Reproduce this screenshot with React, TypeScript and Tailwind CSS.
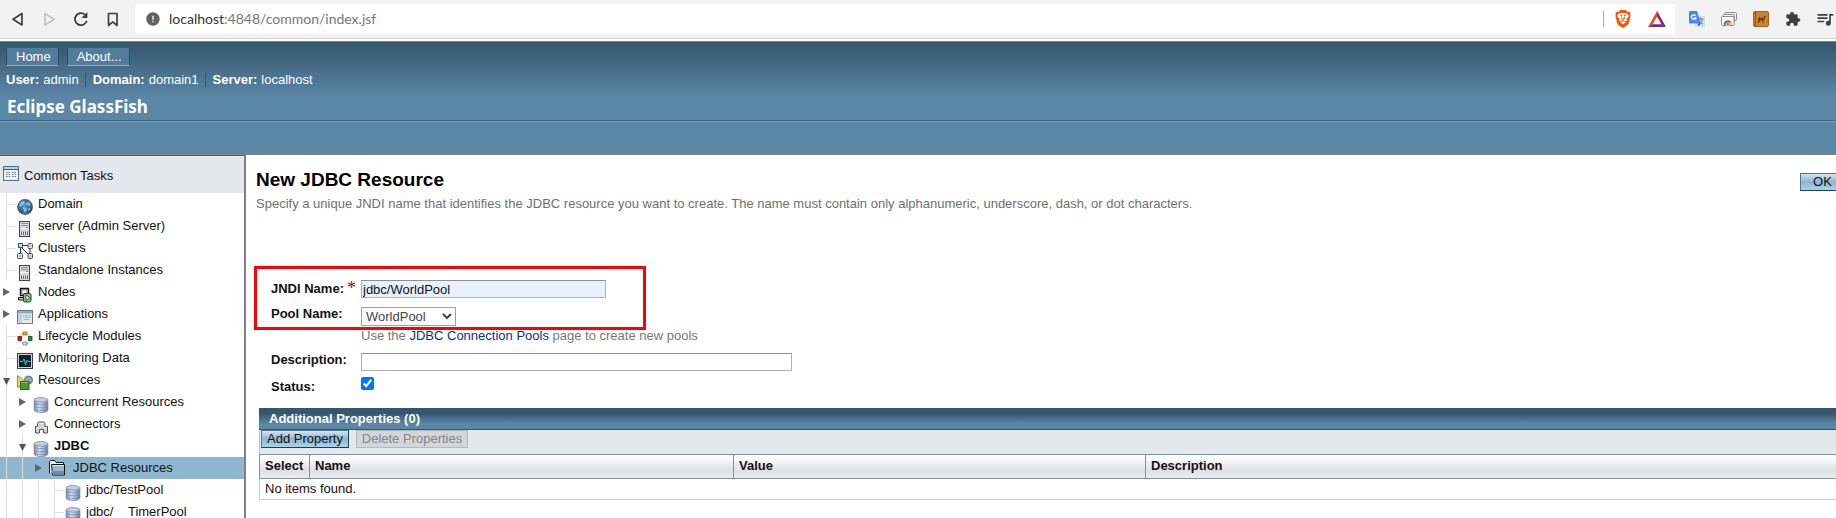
import type { ReactNode } from "react";
import { MdError, MdExtension, MdQueueMusic } from "react-icons/md";
import { SiBrave } from "react-icons/si";

/* ---------- Tree icons ---------- */

const Icon = ({ children }: { children: ReactNode }) => (
  <svg viewBox="0 0 16 16" className="size-4 shrink-0" aria-hidden="true">
    {children}
  </svg>
);

const TasksIcon = () => (
  <Icon>
    <rect x=".5" y=".5" width="15" height="14" fill="#eef1f4" stroke="#4b6f8c" />
    <rect x="1" y="1" width="14" height="2" fill="#b5d3e6" />
    <path d="M0 3.500h16" stroke="#3c5f7c" />
    <path d="M3 6.500h4M9 6.500h4M3 8.500h4M9 8.500h4M3 10.500h4M9 10.500h4" stroke="#6f7780" strokeDasharray="1 .5" />
  </Icon>
);

const GlobeIcon = () => (
  <Icon>
    <defs>
      <radialGradient id="globe" cx=".45" cy=".4" r=".65">
        <stop offset="0" stopColor="#5f9cc8" />
        <stop offset=".6" stopColor="#2f6797" />
        <stop offset="1" stopColor="#1d4468" />
      </radialGradient>
    </defs>
    <circle cx="8" cy="8" r="7.900" fill="url(#globe)" />
    <path d="M3 3.500 6 2l2 1-1 2-2 1-1 1.500L2 7zM9 4l3-1 2 3-1.500 1L11 5.500 9.500 6zM6 8l3 1 1 2-2 3-1.500-3zM11.500 9l2-.5-1 3-1.500.5z" fill="#a9d2e8" opacity=".75" />
    <path d="M2.500 12.200c3.500 3.500 7.500 3.500 11 0-2 3-9 3-11 0z" fill="#b4d8ea" opacity=".8" />
  </Icon>
);

const ServerIcon = () => (
  <Icon>
    <rect x="2.500" y=".5" width="10" height="15" fill="#d8dadd" stroke="#3f4347" />
    <path d="M4 2.500h7M4 4.500h7" stroke="#8b9095" />
    <path d="M3 7.500h9" stroke="#f6f7f8" />
    <rect x="9" y="6" width="2" height="1" fill="#4f8fb0" />
    <path d="M4.500 10.500v3.500M6.500 10.500v3.500M8.500 10.500v3.500M10.500 10.500v3.500" stroke="#6a6e73" />
  </Icon>
);

const ClusterIcon = () => (
  <Icon>
    <path d="M5 2.500h6M3.500 5v6M5 5l6.500 6.500M13 5v6" stroke="#333" fill="none" />
    <rect x="1.500" y=".5" width="4" height="4" fill="#bfe0f2" stroke="#2f5878" />
    <rect x="11" y=".5" width="4.500" height="5" rx="1" fill="#dfe8ee" stroke="#555" />
    <rect x=".5" y="10.500" width="5" height="5" rx="1" fill="#dfe8ee" stroke="#444" />
    <rect x="11" y="10.500" width="4.500" height="5" rx="1" fill="#dfe8ee" stroke="#444" />
    <path d="M2 13h2M12.500 13h2M12.500 3h2" stroke="#7b8b96" />
  </Icon>
);

const NodeIcon = () => (
  <Icon>
    <path d="M3.500 1.500h8v7h-8z" fill="#d5dce2" stroke="#111" strokeWidth="1.400" />
    <path d="M5 3h5v4H5z" fill="#f6f8fa" stroke="#555" strokeWidth=".6" />
    <path d="M1.500 10.500h9v2.500h-9z" fill="#c5ccd2" stroke="#111" />
    <rect x="6.500" y="6.500" width="7.500" height="8.500" rx="1.500" fill="#8cc07c" stroke="#14481a" />
    <path d="M9 8v5.500l4-2.750z" fill="#fff" stroke="#14481a" strokeWidth=".8" />
  </Icon>
);

const AppIcon = () => (
  <Icon>
    <rect x=".5" y="1.500" width="15" height="13" fill="#e4ebf2" stroke="#6e7a86" />
    <rect x="1" y="2" width="14" height="2.500" fill="#8fadca" />
    <rect x="1" y="5" width="4" height="9" fill="#c3cfdc" />
    <path d="M6.500 6.500h3v2h-3zM10.500 6.500h3v2h-3zM6.500 10.500h6" stroke="#a8b6c4" fill="#f4f7fa" />
  </Icon>
);

const LifecycleIcon = () => (
  <Icon>
    <circle cx="8" cy="7.500" r="5.500" fill="none" stroke="#8f969d" strokeDasharray="1.500 1" />
    <rect x="6" y="1" width="4" height="3" fill="#f0b323" stroke="#9a6a00" strokeWidth=".8" />
    <rect x="1" y="5.500" width="3.500" height="4" fill="#c4161c" stroke="#7b0c10" strokeWidth=".8" />
    <rect x="11.500" y="5.500" width="3.500" height="4" fill="#2f8a2c" stroke="#175216" strokeWidth=".8" />
    <rect x="6" y="11" width="4" height="3" fill="#c7dfec" stroke="#6b8fa5" strokeWidth=".8" />
  </Icon>
);

const MonitorIcon = () => (
  <Icon>
    <rect x=".5" y=".5" width="15" height="15" fill="#cfd3d6" stroke="#3d4145" />
    <rect x="2" y="2" width="12" height="12" fill="#0b2430" />
    <path d="M3 8.500h2.500L7 6l1.500 6L10 7l1 1.500h2.500" stroke="#2fd2dc" fill="none" />
  </Icon>
);

const ResourcesIcon = () => (
  <Icon>
    <circle cx="11.500" cy="5" r="4" fill="#93a7b9" stroke="#5d7284" />
    <path d="M.5.5v12l3-1.500V8l5.500-.500z" fill="#f5cf73" stroke="#b98a24" />
    <rect x="3.500" y="6.500" width="8.500" height="8" fill="#4c9a2e" stroke="#2b6414" />
    <path d="M4.500 7.500h6.500" stroke="#8ccb6c" />
  </Icon>
);

const DatabaseIcon = () => (
  <Icon>
    <defs>
      <linearGradient id="db">
        <stop offset="0" stopColor="#7d98c0" />
        <stop offset=".4" stopColor="#d5e1f2" />
        <stop offset="1" stopColor="#6d82a6" />
      </linearGradient>
    </defs>
    <path d="M1.200 3v10c0 1.500 3 2.600 6.800 2.600s6.800-1.100 6.800-2.600V3z" fill="url(#db)" stroke="#7584a0" strokeWidth=".8" />
    <path d="M1.200 5.500c0 1.300 3 2.300 6.800 2.300s6.800-1 6.800-2.300M1.200 8.500c0 1.300 3 2.300 6.800 2.300s6.800-1 6.800-2.300M1.200 11.300c0 1.300 3 2.300 6.800 2.300s6.800-1 6.800-2.300" stroke="#65779a" fill="none" strokeWidth=".7" />
    <ellipse cx="8" cy="2.800" rx="6.800" ry="2.300" fill="#c3cedd" stroke="#74839a" strokeWidth=".7" />
  </Icon>
);

const ConnectorIcon = () => (
  <Icon>
    <path d="M4.500 4.500c0-1 .8-1.500 2-1.500h3.500c1.200 0 2 .5 2 1.500v3h2.500v6.500h-4V10.500h-4v3.500h-4V7.500h2z" fill="#d0d3d6" stroke="#4e5256" />
    <path d="M6.500 4.500h4M3.500 9h2M11.500 9h2" stroke="#f8f8f8" />
  </Icon>
);

const FolderIcon = () => (
  <Icon>
    <path d="M.5 13.500V1.500L1.500.5h4L7 2.500h7.500V5" fill="#f5f8fb" stroke="#111" />
    <path d="M2.500 4.500h13v10.500h-12z" fill="#9db6cf" stroke="#111" />
    <path d="M3 5.500h12" stroke="#dfe9f2" />
    <path d="M3 11h12v3.500H3.500z" fill="#6f8eae" />
  </Icon>
);

/* ---------- Tree ---------- */

type Guide = "line" | "branch" | "closed" | "open";

const GUIDE_PATHS: Record<Guide, ReactNode> = {
  line: <rect x="5" width="1" height="22" fill="#ddd" />,
  branch: <path d="M5 0h1v11h8v1H6v10H5z" fill="#ddd" />,
  closed: <path d="M2 7v8l7-4z" fill="#666" />,
  open: (
    <>
      <path d="M5 0h1v22H5z" fill="#ddd" />
      <path d="M2 9h7l-3.500 7z" fill="#555" />
    </>
  ),
};

const GuideCell = ({ kind }: { kind: Guide }) => (
  <svg viewBox="0 0 16 22" className="h-[22px] w-4 shrink-0" aria-hidden="true">
    {GUIDE_PATHS[kind]}
  </svg>
);

interface TreeItem {
  label: string;
  guides: Guide[];
  icon: ReactNode;
  bold?: boolean;
  selected?: boolean;
}

const TREE: TreeItem[] = [
  { label: "Domain", guides: ["branch"], icon: <GlobeIcon /> },
  { label: "server (Admin Server)", guides: ["branch"], icon: <ServerIcon /> },
  { label: "Clusters", guides: ["branch"], icon: <ClusterIcon /> },
  { label: "Standalone Instances", guides: ["branch"], icon: <ServerIcon /> },
  { label: "Nodes", guides: ["closed"], icon: <NodeIcon /> },
  { label: "Applications", guides: ["closed"], icon: <AppIcon /> },
  { label: "Lifecycle Modules", guides: ["branch"], icon: <LifecycleIcon /> },
  { label: "Monitoring Data", guides: ["branch"], icon: <MonitorIcon /> },
  { label: "Resources", guides: ["open"], icon: <ResourcesIcon /> },
  { label: "Concurrent Resources", guides: ["line", "closed"], icon: <DatabaseIcon /> },
  { label: "Connectors", guides: ["line", "closed"], icon: <ConnectorIcon /> },
  { label: "JDBC", guides: ["line", "open"], icon: <DatabaseIcon />, bold: true },
  { label: "JDBC Resources", guides: ["line", "line", "closed"], icon: <FolderIcon />, selected: true },
  { label: "jdbc/TestPool", guides: ["line", "line", "line", "branch"], icon: <DatabaseIcon /> },
  { label: "jdbc/__TimerPool", guides: ["line", "line", "line", "branch"], icon: <DatabaseIcon /> },
];

const TreeRow = ({ item }: { item: TreeItem }) => (
  <li className={item.selected ? "flex h-[22px] bg-[#8fb7d0] pl-px" : "flex h-[22px] pl-px"}>
    {item.guides.map((kind, i) => (
      <GuideCell key={i} kind={kind} />
    ))}
    <span className={item.selected ? "mr-2 pt-[3px]" : "mr-[5px] pt-1.5"}>{item.icon}</span>
    <a href="#" className={item.bold ? "font-bold leading-[22px]" : "leading-[22px]"}>
      {item.label}
    </a>
  </li>
);

const Sidebar = () => (
  <aside className="w-[246px] shrink-0 overflow-hidden border-r-2 border-[#808080]">
    <div className="flex h-[38px] items-center gap-[5px] border-t border-[#3f6480] bg-[#e4e8ec] pl-[3px]">
      <TasksIcon />
      <a href="#" className="pt-1">
        Common Tasks
      </a>
    </div>
    <ul>
      {TREE.map((item) => (
        <TreeRow key={item.label} item={item} />
      ))}
    </ul>
  </aside>
);

/* ---------- Browser bar ---------- */

const TranslateIcon = () => (
  <Icon>
    <rect x="6" y="5" width="10" height="11" rx="1" fill="#dadce0" />
    <path d="M8.500 8h6M11.500 6.500V8M13.500 8c-.5 2.500-2 4-3.500 5M10 9.500c1 2 2.500 3 4 3.500" stroke="#5f7f9a" fill="none" />
    <path d="M1 0h7l4 12.500H1a1 1 0 0 1-1-1V1a1 1 0 0 1 1-1z" fill="#4a86e8" />
    <path d="M8.500 12.500h3.500L9.500 15.500z" fill="#2f5fc0" />
    <path d="M6.800 5A2.300 2.300 0 1 0 7 6.800H4.800" fill="none" stroke="#fff" strokeWidth="1.200" />
  </Icon>
);

const ScreensIcon = () => (
  <Icon>
    <rect x="4" y="1.500" width="11.500" height="8" rx="1" fill="#f1f1f1" stroke="#8b8b8b" />
    <rect x="2" y="3.500" width="11.500" height="8" rx="1" fill="#f1f1f1" stroke="#8b8b8b" />
    <rect x=".5" y="5.500" width="12.500" height="9" rx="1" fill="#fff" stroke="#8b8b8b" />
    <path d="M2.500 14a4.300 4.300 0 0 1 2.200-4l2 3.500z" fill="#2fa04c" />
    <path d="M3.500 11a4.300 4.300 0 0 1 7 0l-3.500 1.500z" fill="#e23b2e" />
    <path d="M10.500 11c.6.800.8 2 .6 3H7z" fill="#f7c52b" />
    <circle cx="6.900" cy="13" r="1.600" fill="#3d7bea" stroke="#fff" strokeWidth=".6" />
  </Icon>
);

const CamelIcon = () => (
  <Icon>
    <rect x=".5" y=".5" width="15" height="15" rx="1.500" fill="#cd7f32" stroke="#a8611f" />
    <path d="M2.500 1v14" stroke="#8c4f17" />
    <path d="M5 12V8l1.500-2L8 7.500 9.500 6l1 1.500.8-2.500H13v1h-1l-.5 2.500-1 1V12h-1V9.500H7L6 12z" fill="#6b3c12" />
  </Icon>
);

const BrowserBar = () => (
  <div className="flex h-[39px] items-center border-b border-[#cfd8d9] bg-[#f2f2f2] text-[#3c4043]">
    <div className="flex w-[135px] shrink-0 items-center gap-[14px] pl-2">
      <button type="button" aria-label="Back">
        <svg viewBox="0 0 18 18" className="size-[18px]" fill="none" stroke="currentColor" strokeWidth="1.700" strokeLinejoin="round">
          <path d="M14 3.500v11.500L5 9.200z" />
        </svg>
      </button>
      <button type="button" aria-label="Forward" className="text-[#c2c2c2]">
        <svg viewBox="0 0 18 18" className="size-[18px]" fill="none" stroke="currentColor" strokeWidth="1.700" strokeLinejoin="round">
          <path d="M5 3.500v11.500L14 9.200z" />
        </svg>
      </button>
      <button type="button" aria-label="Reload">
        <svg viewBox="0 0 18 18" className="size-[18px]" fill="none" stroke="currentColor" strokeWidth="1.800" strokeLinecap="round">
          <path d="M14.500 11.500A6 6 0 1 1 13 4.700" />
          <path d="M14.800 3.500v3.800H11z" fill="currentColor" stroke="currentColor" strokeWidth="1.200" />
        </svg>
      </button>
      <button type="button" aria-label="Bookmark">
        <svg viewBox="0 0 18 18" className="size-[18px]" fill="none" stroke="currentColor" strokeWidth="1.700" strokeLinejoin="round">
          <path d="M4.500 3.500H13v12l-4.250-3.700L4.500 15.500z" />
        </svg>
      </button>
    </div>
    <div className="flex h-[30px] grow items-center rounded-[3px] bg-white pl-2.5 pr-[9px]">
      <MdError className="size-4 shrink-0 text-[#5f6368]" />
      <button type="button" className="grow pl-2 text-left font-['Lato',sans-serif] text-[14px] leading-5 text-[#777]">
        <span className="text-[#333]">localhost</span>:4848/common/index.jsf
      </button>
      <span className="h-4 w-px bg-[#a9a9a9]" />
      <SiBrave className="ml-2.5 h-[18px] w-[18px] text-[#ff5000]" />
      <svg viewBox="0 0 18 16" className="ml-4 h-4 w-[18px]" aria-hidden="true">
        <path d="M9 0 0 16l4.500-2.500L9 5.500z" fill="#ff4724" />
        <path d="M9 0l9 16-4.500-2.500L9 5.500z" fill="#9e1f63" />
        <path d="M0 16h18l-4.500-2.700h-9z" fill="#662d91" />
      </svg>
    </div>
    <div className="flex shrink-0 items-center gap-4 pl-3.5 pr-[1px]">
      <TranslateIcon />
      <ScreensIcon />
      <CamelIcon />
      <MdExtension className="size-4" />
      <MdQueueMusic className="-ml-0.5 size-5" />
    </div>
  </div>
);

/* ---------- Masthead ---------- */

const MastButton = ({ children }: { children: ReactNode }) => (
  <button
    type="button"
    className="h-[18px] border-x border-b border-x-[#2f4a66] border-b-[#8fb4cd] bg-[#527c9b] pl-[9px] pr-[7px] leading-[17px]"
  >
    {children}
  </button>
);

const Masthead = () => (
  <header className="mt-0.5 h-[114px] shrink-0 border-b-2 border-t border-[#808080] bg-linear-to-b from-[#35566d] to-[#5b87a6] to-50% text-white">
    <nav className="flex gap-2 pl-1.5 pt-1.5">
      <MastButton>Home</MastButton>
      <MastButton>About...</MastButton>
    </nav>
    <dl className="mt-[7px] flex h-[14px] gap-1.5 pl-1.5 leading-[14px]">
      {[
        ["User:", "admin"],
        ["Domain:", "domain1"],
        ["Server:", "localhost"],
      ].map(([term, value], i) => (
        <div key={term} className={i ? "flex gap-1 border-l border-[#35566d] pl-[7px]" : "flex gap-1"}>
          <dt className="font-bold">{term}</dt>
          <dd>{value}</dd>
        </div>
      ))}
    </dl>
    <div className="mt-2 h-[26px] border-b border-[#3f6480] pl-[7px] font-['Noto_Sans',sans-serif] text-[17px] font-bold leading-6">
      Eclipse GlassFish
    </div>
    <div className="h-px bg-[#7ba3bf]" />
  </header>
);

/* ---------- Content ---------- */

const PRIMARY =
  "h-[18px] border border-b-[#1d3c5a] border-l-[#55758f] border-r-[#1d3c5a] border-t-[#55758f] bg-linear-to-b from-[#d3e4ee] via-[#8db6cf] to-[#a9d3ec] leading-4";

const FIELD = "h-[18px] border border-[#b0b0b0] border-t-[#8f8f8f] px-px pt-px leading-4";

const HEAD = "border border-[#7b929f] px-[5px] text-left font-bold last:border-r-0";

const ResourceForm = () => (
  <form className="relative mt-[67px] flex flex-col pl-[15px] leading-[18px]">
    <div className="flex">
      <label htmlFor="jndi" className="flex w-[90px] gap-[3px] font-bold">
        JNDI Name:
        <span className="font-['Liberation_Serif',serif] text-[18px] font-normal leading-4 text-[#b00000]">*</span>
      </label>
      <input id="jndi" defaultValue="jdbc/WorldPool" className={`${FIELD} w-[245px] bg-[#e8f0fe]`} />
    </div>
    <div className="mt-[7px] flex">
      <label htmlFor="pool" className="w-[90px] font-bold">
        Pool Name:
      </label>
      <div className="pt-0.5">
        <select id="pool" className="block h-[19px] w-[95px] border border-[#a0a0a0] bg-white text-[#444]">
          <option>WorldPool</option>
        </select>
        <p className="mt-px text-[#777]">
          Use the{" "}
          <a href="#" className="text-[#0a2f8f]">
            JDBC Connection Pools
          </a>{" "}
          page to create new pools
        </p>
      </div>
    </div>
    <div className="mt-1.5 flex">
      <label htmlFor="description" className="w-[90px] font-bold">
        Description:
      </label>
      <input id="description" className={`${FIELD} mt-0.5 w-[431px] bg-white`} />
    </div>
    <div className="mt-1.5 flex pb-px">
      <label htmlFor="status" className="w-[90px] pt-px font-bold">
        Status:
      </label>
      <input id="status" type="checkbox" defaultChecked className="size-[13px]" />
    </div>
    <div className="pointer-events-none absolute -left-0.5 -top-3.5 h-16 w-[392px] border-[3px] border-[#ff0000]" />
  </form>
);

const PropertiesTable = () => (
  <section className="ml-[3px] mt-[11px]">
    <h2 className="h-[22px] border-b border-[#35566d] bg-linear-to-b from-[#35566d] from-25% to-[#5b87a6] to-75% pl-2.5 font-bold leading-[22px] text-white">
      Additional Properties (0)
    </h2>
    <div className="flex h-6 gap-[7px] border-l border-[#b9c3c9] bg-[#e4e8ec] pl-px">
      <button type="button" className={`${PRIMARY} w-[88px]`}>
        Add Property
      </button>
      <button type="button" disabled className="h-[18px] w-[112px] border border-[#b5b8bc] bg-[#d2d5d9] leading-4 text-[#848689]">
        Delete Properties
      </button>
    </div>
    <table className="w-full table-fixed border-collapse border-b border-l border-[#c9cdcf]">
      <thead>
        <tr className="h-6 bg-linear-to-b from-[#fafafb] from-20% via-[#dfe0e4] via-70% to-[#eeeef0]">
          <th className={`${HEAD} w-[50px]`}>Select</th>
          <th className={`${HEAD} w-[424px]`}>Name</th>
          <th className={`${HEAD} w-[412px]`}>Value</th>
          <th className={HEAD}>Description</th>
        </tr>
      </thead>
      <tbody>
        <tr>
          <td colSpan={4} className="px-[5px] leading-5">
            No items found.
          </td>
        </tr>
      </tbody>
    </table>
  </section>
);

export default function App() {
  return (
    <div className="flex h-screen flex-col overflow-hidden bg-white font-['Liberation_Sans',Arial,sans-serif] text-[13px] text-[#111]">
      <BrowserBar />
      <Masthead />
      <div className="flex min-h-0 grow">
        <Sidebar />
        <main className="min-w-0 grow overflow-hidden pl-2.5 pt-[13px]">
          <div className="flex items-start justify-between">
            <h1 className="text-[19px] font-bold leading-6 text-black">New JDBC Resource</h1>
            <button type="button" className={`${PRIMARY} mt-[5px] w-9 border-r-0 pl-2`}>
              OK
            </button>
          </div>
          <p className="mt-[3px] leading-[18px] text-[#6f6f6f]">
            Specify a unique JNDI name that identifies the JDBC resource you want to create. The name must contain only
            alphanumeric, underscore, dash, or dot characters.
          </p>
          <ResourceForm />
          <PropertiesTable />
        </main>
      </div>
    </div>
  );
}
